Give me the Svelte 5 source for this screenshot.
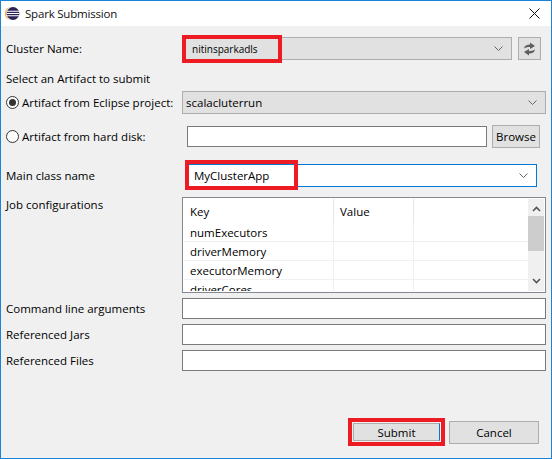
<script>
	const rows = ['numExecutors', 'driverMemory', 'executorMemory', 'driverCores']
</script>

<div class="window">
	<div class="titlebar">
		<svg class="logo" width="15" height="15" viewBox="0 0 15 15">
			<path d="M4.500 1A7 7 0 0 0 4.500 14 8 8 0 0 1 4.500 1z" fill="#f7941e" />
			<circle cx="8" cy="7.500" r="6.400" fill="#2c2255" />
			<path d="M1.800 5.200h12.400M1.600 7.500h12.800M1.800 9.800h12.400" stroke="#fff" stroke-width="1.100" />
		</svg>
		<span class="title">Spark Submission</span>
		<svg class="close" width="11" height="11" viewBox="0 0 11 11">
			<path d="M.5.5l10 10M10.500.5l-10 10" stroke="#111" stroke-width="1" fill="none" />
		</svg>
	</div>

	<div class="body">
		<div class="row cluster-row">
			<span class="label">Cluster Name:</span>
			<div class="combo disabled small">
				<span class="mark mark-cluster"></span>
				<span>nitinsparkadls</span>
				<svg class="chev" width="9" height="5" viewBox="0 0 9 5"><path d="M.5.5l4 4 4-4" fill="none" stroke="#666" /></svg>
			</div>
			<button class="btn refresh" aria-label="Refresh">
				<svg width="13" height="14" viewBox="0 0 13 14">
					<path id="sync-top" d="M1 6.500C1.500 3.500 4 2.500 7 2.500V.5L12 4 7 7V5C5 5 3 5.300 1 6.500z" fill="#5f5f5f" />
					<path d="M12 7.500C11.500 10.500 9 11.500 6 11.500V13.500L1 10 6 7V9C8 9 10 8.700 12 7.500z" fill="#5f5f5f" />
				</svg>
			</button>
		</div>

		<div class="section">Select an Artifact to submit</div>

		<div class="row artifact-row">
			<span class="radio checked"></span>
			<span class="radio-label">Artifact from Eclipse project:</span>
			<div class="combo disabled wide">
				<span>scalacluterrun</span>
				<svg class="chev" width="9" height="5" viewBox="0 0 9 5"><path d="M.5.5l4 4 4-4" fill="none" stroke="#666" /></svg>
			</div>
		</div>

		<div class="row disk-row">
			<span class="radio"></span>
			<span class="radio-label">Artifact from hard disk:</span>
			<div class="input disk-input"></div>
			<button class="btn browse">Browse</button>
		</div>

		<div class="row main-row">
			<span class="label">Main class name</span>
			<div class="combo focused">
				<span class="mark mark-main"></span>
				<span>MyClusterApp</span>
				<svg class="chev" width="9" height="5" viewBox="0 0 9 5"><path d="M.5.5l4 4 4-4" fill="none" stroke="#666" /></svg>
			</div>
		</div>

		<div class="row table-row">
			<span class="label job">Job configurations</span>
			<div class="table">
				<div class="grid">
					<div class="head">
						<div class="cell key">Key</div>
						<div class="cell val">Value</div>
						<div class="cell rest"></div>
					</div>
					{#each rows as name}
						<div class="tr">
							<div class="cell key">{name}</div>
							<div class="cell val"></div>
							<div class="cell rest"></div>
						</div>
					{/each}
				</div>
				<div class="scrollbar">
					<svg width="9" height="6" viewBox="0 0 9 6"><path d="M1 5l3.500-3.500L8 5" fill="none" stroke="#555" stroke-width="1.600" /></svg>
					<div class="thumb"></div>
					<svg class="down" width="9" height="6" viewBox="0 0 9 6"><path d="M1 1l3.500 3.500L8 1" fill="none" stroke="#555" stroke-width="1.600" /></svg>
				</div>
			</div>
		</div>

		<div class="row arg-row">
			<span class="label">Command line arguments</span>
			<div class="input"></div>
		</div>
		<div class="row arg-row">
			<span class="label">Referenced Jars</span>
			<div class="input"></div>
		</div>
		<div class="row arg-row">
			<span class="label">Referenced Files</span>
			<div class="input"></div>
		</div>

		<div class="footer">
			<button class="btn submit">Submit</button>
			<button class="btn cancel">Cancel</button>
		</div>
	</div>
</div>

<style>
	:global(body) {
		margin: 0;
		background: #f0f0f0;
	}

	.window {
		box-sizing: border-box;
		width: 552px;
		height: 459px;
		border: 1px solid #1883d7;
		display: flex;
		flex-direction: column;
		font-family: "Open Sans", sans-serif;
		font-size: 11.5px;
		color: #000;
		overflow: hidden;
	}

	.titlebar {
		height: 25px;
		flex: none;
		background: #fff;
		display: flex;
		align-items: center;
		padding: 0 11px 0 4px;
	}
	.logo {
		margin-right: 5px;
	}
	.title {
		font-size: 11.5px;
		letter-spacing: -0.2px;
		flex: 1;
		color: #111;
	}

	.body {
		flex: 1;
		background: #f0f0f0;
		padding: 11px 5px 0;
		display: flex;
		flex-direction: column;
	}

	.row {
		display: flex;
		align-items: center;
	}
	.label {
		width: 176px;
		flex: none;
	}

	.combo {
		position: relative;
		box-sizing: border-box;
		height: 23px;
		flex: 1;
		display: flex;
		align-items: center;
		justify-content: space-between;
		padding: 0 8px 0 4px;
		border: 1px solid #adadad;
	}
	.disabled {
		background: #e1e1e1;
	}
	.small {
		font-size: 10px;
		padding-left: 9px;
	}
	.focused {
		background: #fff;
		border-color: #0078d7;
		padding-left: 8px;
		margin-right: 9px;
		margin-left: 3px;
	}
	.chev {
		flex: none;
	}

	/* red highlight boxes drawn over the screenshot */
	.mark {
		position: absolute;
		box-sizing: border-box;
		border: 4px solid #ed1c24;
		pointer-events: none;
	}
	.mark-cluster {
		left: -1px;
		top: -3px;
		width: 100px;
		height: 28px;
	}
	.mark-main {
		left: -1px;
		top: -5px;
		width: 113px;
		height: 30px;
	}

	.btn {
		box-sizing: border-box;
		height: 23px;
		padding: 0;
		border: 1px solid #adadad;
		background: #e1e1e1;
		font: inherit;
		color: #000;
	}
	.refresh {
		width: 23px;
		margin: 0 5px 0 6px;
		display: flex;
		align-items: center;
		justify-content: center;
	}

	.section {
		margin-top: 11px;
		height: 16px;
		line-height: 16px;
	}

	.artifact-row {
		margin-top: 4px;
	}
	.disk-row {
		margin-top: 11px;
		height: 23px;
	}
	.radio {
		box-sizing: border-box;
		width: 13px;
		height: 13px;
		flex: none;
		border: 1px solid #333;
		border-radius: 50%;
		background: #fff;
		display: flex;
		align-items: center;
		justify-content: center;
	}
	.checked::after {
		content: "";
		width: 7px;
		height: 7px;
		border-radius: 50%;
		background: #333;
	}
	.radio-label {
		margin-left: 3px;
		width: 160px;
		flex: none;
	}
	.wide {
		padding-left: 3px;
	}

	.input {
		box-sizing: border-box;
		flex: 1;
		height: 21px;
		background: #fff;
		border: 1px solid #7a7a7a;
	}
	.disk-input {
		flex: none;
		width: 300px;
		margin-left: 5px;
	}
	.browse {
		width: 48px;
		margin-left: 5px;
		margin-right: 5px;
	}

	.main-row {
		margin-top: 16px;
	}

	.table-row {
		margin-top: 10px;
		align-items: flex-start;
	}
	.job {
		line-height: 16px;
	}
	.table {
		box-sizing: border-box;
		flex: 1;
		height: 96px;
		background: #fff;
		border: 1px solid #828790;
		position: relative;
		display: flex;
		padding: 1px;
		overflow: hidden;
	}
	.grid {
		flex: 1;
		overflow: hidden;
	}
	.head,
	.tr {
		display: flex;
		box-sizing: border-box;
	}
	.head {
		height: 24px;
		align-items: stretch;
	}
	.tr {
		height: 19px;
		border-bottom: 1px solid #f0f0f0;
	}
	.cell {
		box-sizing: border-box;
		display: flex;
		align-items: center;
		padding-left: 6px;
		border-right: 1px solid #f0f0f0;
	}
	.head .cell {
		border-right-color: #e5e5e5;
	}
	.key {
		width: 150px;
	}
	.val {
		width: 80px;
	}
	.rest {
		flex: 1;
		border-right: none;
	}
	.scrollbar {
		width: 16px;
		flex: none;
		background: #f0f0f0;
		display: flex;
		flex-direction: column;
		align-items: center;
		padding-top: 7px;
		box-sizing: border-box;
		position: relative;
	}
	.thumb {
		width: 16px;
		height: 35px;
		background: #cdcdcd;
		margin-top: 4px;
	}
	.down {
		margin-top: auto;
		margin-bottom: 7px;
	}

	.arg-row {
		margin-top: 5px;
	}

	.footer {
		margin-top: auto;
		margin-bottom: 14px;
		display: flex;
		justify-content: flex-end;
		padding-right: 7px;
	}
	.submit {
		width: 87px;
		height: 18px;
		margin: 2px 9px 0 0;
		outline: 4px solid #ed1c24;
		outline-offset: 1px;
		border-right-color: #0078d7;
	}
	.cancel {
		width: 90px;
	}
</style>
